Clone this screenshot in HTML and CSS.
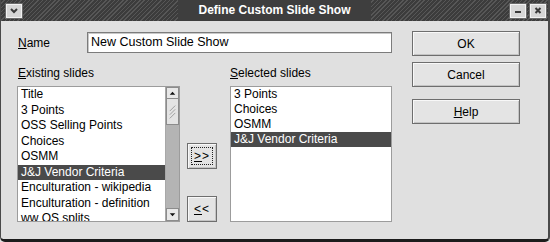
FILE: index.html
```html
<!DOCTYPE html>
<html lang="en">
<head>
    <meta charset="UTF-8">
    <title>Define Custom Slide Show</title>
    <link rel="stylesheet" href="styles.css">
</head>
<body>
    <div class="window">
        <div class="titlebar">
            <div class="tb-left">
                <span class="tb-btn">
                    <svg width="14" height="12" viewBox="0 0 14 12"><path d="M4 4 L7 7 L10 4" fill="none" stroke="#3a3a3a" stroke-width="2"/></svg>
                </span>
            </div>
            <div class="tb-title">Define Custom Slide Show</div>
            <div class="tb-right">
                <span class="tb-btn">
                    <svg width="14" height="12" viewBox="0 0 14 12"><rect x="4" y="6" width="6" height="2" fill="#3a3a3a"/></svg>
                </span>
                <span class="tb-btn">
                    <svg width="14" height="12" viewBox="0 0 14 12"><path d="M4.5 3 L9.5 8 M9.5 3 L4.5 8" stroke="#3a3a3a" stroke-width="2"/></svg>
                </span>
            </div>
        </div>

        <div class="content">
            <div class="main">
                <div class="name-row">
                    <div class="label name-label"><u>N</u>ame</div>
                    <div class="entry">New Custom Slide Show</div>
                </div>

                <div class="lists">
                    <div class="label first"><u>E</u>xisting slides</div>
                    <div></div>
                    <div class="label"><u>S</u>elected slides</div>

                    <div class="listbox">
                        <ul class="items">
                            <li>Title</li>
                            <li>3 Points</li>
                            <li>OSS Selling Points</li>
                            <li>Choices</li>
                            <li>OSMM</li>
                            <li class="selected">J&amp;J Vendor Criteria</li>
                            <li>Enculturation - wikipedia</li>
                            <li>Enculturation - definition</li>
                            <li>ww OS splits</li>
                        </ul>
                        <div class="scrollbar">
                            <div class="sb-btn">
                                <svg width="12" height="10" viewBox="0 0 12 10"><path d="M3 7 L6 3.5 L9 7 Z" fill="#111"/></svg>
                            </div>
                            <div class="sb-thumb">
                                <svg width="12" height="24" viewBox="0 0 12 24"><path d="M3 11 L9 5 M3 15 L9 9 M3 19 L9 13" stroke="#9a9a9a" stroke-width="1"/></svg>
                            </div>
                            <div class="sb-trough"></div>
                            <div class="sb-btn down">
                                <svg width="12" height="11" viewBox="0 0 12 11"><path d="M3 4 L6 7.5 L9 4 Z" fill="#111"/></svg>
                            </div>
                        </div>
                    </div>

                    <div class="move">
                        <button class="btn small focused"><span><u>&gt;</u>&gt;</span></button>
                        <button class="btn small"><span><u>&lt;</u>&lt;</span></button>
                    </div>

                    <div class="listbox">
                        <ul class="items tight">
                            <li>3 Points</li>
                            <li>Choices</li>
                            <li>OSMM</li>
                            <li class="selected">J&amp;J Vendor Criteria</li>
                        </ul>
                    </div>
                </div>
            </div>

            <div class="actions">
                <button class="btn">OK</button>
                <button class="btn cancel">Cancel</button>
                <button class="btn help"><u>H</u>elp</button>
            </div>
        </div>
    </div>
</body>
</html>
```

FILE: styles.css
```css
* {
    margin: 0;
    padding: 0;
    box-sizing: border-box;
}

body {
    font-family: 'Liberation Sans', Arial, sans-serif;
    background-color: #e0e0e0;
    color: #000;
}

.window {
    width: 550px;
    height: 242px;
    display: flex;
    flex-direction: column;
    background-color: #e0e0e0;
    border-left: 1px solid #4a4a4a;
    border-right: 2px solid #4a4a4a;
    border-bottom: 3px solid #1c1c1c;
    border-radius: 0 0 5px 5px;
    overflow: hidden;
}

/* barre de titre */
.titlebar {
    height: 21px;
    display: grid;
    grid-template-columns: 1fr auto 1fr;
    align-items: center;
    background-color: #3e3e3e;
    background-image: repeating-linear-gradient(135deg, #3c3c3c 0, #3c3c3c 2px, #575757 2px, #575757 3px);
}

.tb-left {
    display: flex;
    padding-left: 4px;
}

.tb-right {
    display: flex;
    justify-content: flex-end;
    gap: 2px;
    padding-right: 1px;
}

.tb-btn {
    width: 16px;
    height: 14px;
    display: flex;
    align-items: center;
    justify-content: center;
    background-color: #d6d6d6;
    border: 1px solid #f2f2f2;
    outline: 1px solid #6a6a6a;
    margin: 0 1px;
}

.tb-title {
    font-size: 12px;
    font-weight: 700;
    color: #fff;
    background-color: #3e3e3e;
    padding: 0 20px;
    line-height: 21px;
}

/* contenu */
.content {
    flex: 1;
    display: flex;
    padding: 10px 0 0 16px;
}

.main {
    width: 375px;
    padding-top: 1px;
}

.label {
    font-size: 12px;
    line-height: 14px;
}

.name-row {
    display: flex;
    align-items: center;
    height: 21px;
}

.name-label {
    width: 70px;
    padding-left: 1px;
}

.entry {
    flex: 1;
    height: 21px;
    background-color: #fff;
    border: 1px solid #7c7c7c;
    box-shadow: inset 1px 1px 0 #c8c8c8;
    font-size: 12.5px;
    line-height: 19px;
    padding-left: 3px;
}

.lists {
    margin-top: 13px;
    display: grid;
    grid-template-columns: 163px 50px 162px;
    grid-template-rows: 14px 136px;
    row-gap: 6px;
}

.label.first {
    padding-left: 1px;
}

.listbox {
    display: flex;
    background-color: #fff;
    border: 1px solid #9c9c9c;
    overflow: hidden;
}

.items {
    flex: 1;
    list-style: none;
    font-size: 12px;
    line-height: 15.5px;
    white-space: nowrap;
    overflow: hidden;
}

.items li {
    padding-left: 3px;
}

.items.tight {
    line-height: 15px;
}

.items li.selected {
    background-color: #4a4a4a;
    color: #fff;
}

.scrollbar {
    width: 14px;
    display: flex;
    flex-direction: column;
    background-color: #b4b4b4;
    border-left: 1px solid #a8a8a8;
}

.sb-btn {
    height: 12px;
    display: flex;
    align-items: center;
    justify-content: center;
    background-color: #e8e8e8;
    border: 1px solid #8c8c8c;
}

.sb-btn.down {
    height: 13px;
}

.sb-thumb {
    height: 26px;
    display: flex;
    align-items: center;
    justify-content: center;
    background-color: #e4e4e4;
    border: 1px solid #8c8c8c;
    border-top: none;
}

.sb-trough {
    flex: 1;
}

.move {
    display: flex;
    flex-direction: column;
    justify-content: flex-end;
    gap: 27px;
    padding-left: 7px;
}

/* boutons */
.btn {
    font-family: 'Liberation Sans', Arial, sans-serif;
    font-size: 12px;
    color: #000;
    height: 25px;
    background-color: #e4e4e4;
    border: 1px solid #6e6e6e;
    box-shadow: inset 1px 1px 0 #f8f8f8, inset -1px -1px 0 #c4c4c4;
}

.btn.small {
    width: 30px;
    height: 26px;
    display: flex;
    padding: 3px;
}

.btn.small span {
    flex: 1;
    display: flex;
    align-items: center;
    justify-content: center;
    border: 1px solid transparent;
    letter-spacing: 1px;
}

.btn.focused span {
    border: 1px dotted #222;
}

.actions {
    width: 108px;
    margin-left: 20px;
    display: flex;
    flex-direction: column;
}

.actions .cancel {
    margin-top: 6px;
}

.actions .help {
    margin-top: 12px;
}
```
